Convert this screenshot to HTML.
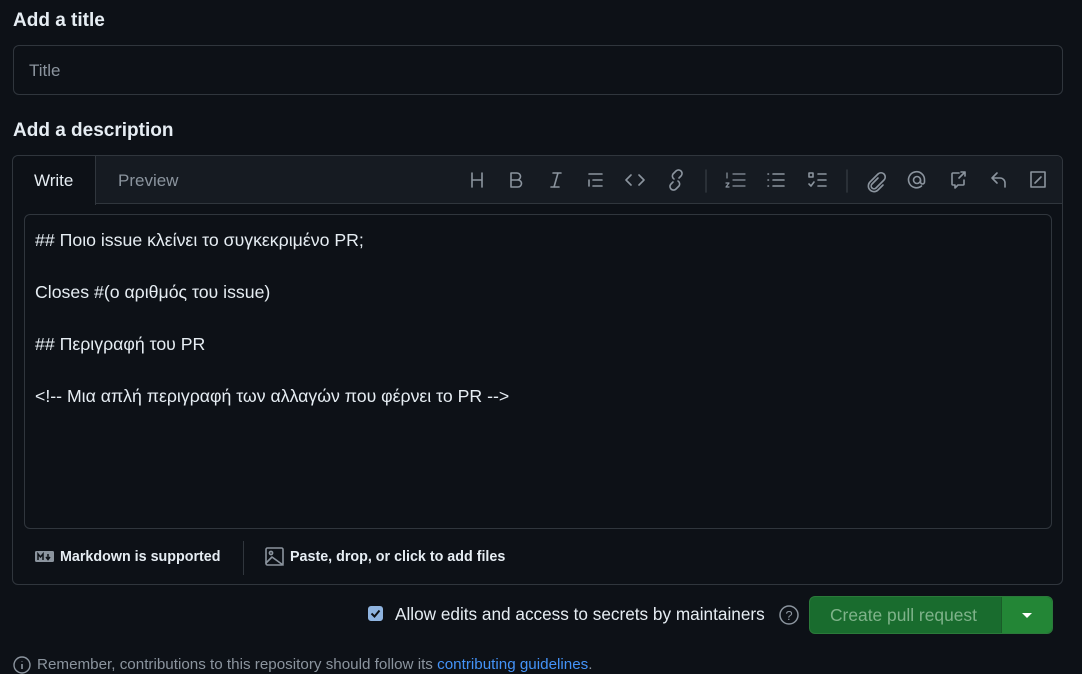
<!DOCTYPE html>
<html><head><style>
*{box-sizing:border-box;margin:0;padding:0}
body{width:1082px;height:672px;overflow:hidden;background:#0d1117;color:#e6edf3;font-family:"Liberation Sans",sans-serif;position:relative}
.abs{position:absolute}
h2{position:absolute;font-size:19px;font-weight:bold;color:#e6edf3}
.inp{left:13px;top:45px;width:1050px;height:50px;border:1px solid #30363d;border-radius:6px;background:#0d1117;color:#8b949e;font-size:17px;padding:15px 0 0 15px}
.ed{left:12px;top:155px;width:1051px;height:430px;border:1px solid #30363d;border-radius:6px}
.hdr{left:0;top:0;width:1049px;height:48px;background:#161b22;border-bottom:1px solid #30363d;border-radius:6px 6px 0 0}
.tab{left:0;top:0;width:83px;height:49px;background:#0d1117;border-right:1px solid #30363d;border-radius:6px 0 0 0;font-size:17px;padding:15px 0 0 21px}
.ta{left:11px;top:58px;width:1028px;height:315px;border:1px solid #30363d;border-radius:6px;font-size:17.7px;line-height:26px;padding:12px 10px;white-space:pre}
svg{position:absolute}
.ic{stroke:#8b949e;fill:none;stroke-width:1.6;stroke-linecap:round;stroke-linejoin:round}
.ft{font-size:14.3px;font-weight:bold;color:#e6edf3}
</style></head><body>
<h2 style="left:13px;top:10px">Add a title</h2>
<div class="abs inp">Title</div>
<h2 style="left:13px;top:120px">Add a description</h2>
<div class="abs ed">
 <div class="abs hdr"></div>
 <div class="abs tab">Write</div>
 <div class="abs" style="left:105px;top:15px;font-size:17px;color:#8b949e">Preview</div>
 <svg width="600" height="48" style="left:440px;top:0" class="ic">
  <g transform="translate(3)"><path d="M16 17v14M26 17v14M16 24h10"/></g>
  <g transform="translate(2)"><path d="M56 17h6a3.5 3.5 0 0 1 0 7h-6zM56 24h7a3.5 3.5 0 0 1 0 7h-7z"/></g>
  <g transform="translate(3)"><path d="M97 17h8M95 31h8M102 17l-4 14"/></g>
  <path d="M136 18h13M140 24h9M140 30h9M136 24v6"/>
  <g transform="translate(-2)"><path d="M180 19l-5 5 5 5M188 19l5 5-5 5"/></g>
  <g transform="translate(-2)"><path d="M222 26l-2 2a3.5 3.5 0 0 0 5 5l3-3a3.5 3.5 0 0 0-1-5M228 22l2-2a3.5 3.5 0 0 0-5-5l-3 3a3.5 3.5 0 0 0 1 5"/></g>
  <path d="M253 14v22" stroke="#30363d"/>
  <g transform="translate(-6)"><path d="M286 18h12M286 24h12M286 30h12M280 17v5M279 27h3l-3 4h3" stroke-width="1.2"/></g>
  <g transform="translate(-7)"><path d="M327 18h11M327 24h11M327 30h11M322 18h.5M322 24h.5M322 30h.5"/></g>
  <g transform="translate(-12)"><path d="M368 17h4v4h-4zM377 18h8M377 24h8M377 30h8M368 28l2 2 3-4"/></g>
  <path d="M394 14v22" stroke="#30363d"/>
  <g transform="translate(-16)"><path d="M441 22l-6 6a2.5 2.5 0 0 0 4 4l8-8a4 4 0 0 0-6-6l-8 8a5.5 5.5 0 0 0 8 8l5-5"/></g>
  <g transform="translate(-13)"><circle cx="477" cy="24" r="3.5"/><path d="M480.5 24v2a2 2 0 0 0 4 0v-2a8 8 0 1 0-3 6"/></g>
  <g transform="translate(-16)"><path d="M522 17h-6a1 1 0 0 0-1 1v10a1 1 0 0 0 1 1h2v3l3-3h5a1 1 0 0 0 1-1v-4M524 16h4v4M528 16l-6 6"/></g>
  <g transform="translate(-11)"><path d="M555 17l-5 5 5 5M550 22h8a5 5 0 0 1 5 5v4"/></g>
  <g transform="translate(-11)"><path d="M589 16h14v15h-14zM593 27l6-6"/></g>
 </svg>
 <div class="abs ta">## Ποιο issue κλείνει το συγκεκριμένο PR;

Closes #(ο αριθμός του issue)

## Περιγραφή του PR

&lt;!-- Μια απλή περιγραφή των αλλαγών που φέρνει το PR --&gt;</div>
 <svg width="20" height="14" style="left:22px;top:394px"><rect x="0" y="1" width="19" height="11" rx="1.5" fill="#8b949e"/><path d="M3 10V4l2.5 3L8 4v6M13 4v5M11 7l2 2.5L15 7" stroke="#0d1117" stroke-width="1.5" fill="none"/></svg>
 <div class="abs ft" style="left:47px;top:393px">Markdown is supported</div>
 <div class="abs" style="left:230px;top:385px;width:1px;height:34px;background:#30363d"></div>
 <svg width="20" height="20" style="left:252px;top:391px" class="ic"><rect x="1" y="1" width="17" height="17" rx="1.5"/><circle cx="6" cy="6" r="1.6"/><path d="M1 16l6-6 11 8"/></svg>
 <div class="abs ft" style="left:277px;top:393px">Paste, drop, or click to add files</div>
</div>
<div class="abs" style="left:368px;top:606px;width:15px;height:15px;background:#8fb4e0;border-radius:3px"></div>
<svg width="15" height="15" style="left:368px;top:606px"><path d="M3.5 7.5l3 3 5-6" stroke="#0d1117" stroke-width="2" fill="none"/></svg>
<div class="abs" style="left:395px;top:604px;font-size:17.2px;color:#e6edf3">Allow edits and access to secrets by maintainers</div>
<svg width="22" height="22" style="left:778px;top:604px"><circle cx="11" cy="11" r="9" stroke="#8b949e" stroke-width="1.5" fill="none"/><text x="11" y="16" font-size="13" fill="#8b949e" text-anchor="middle" font-family="Liberation Sans">?</text></svg>
<div class="abs" style="left:809px;top:596px;width:244px;height:38px;background:#196c2e;border-radius:6px;border:1px solid #2b7a3a"></div>
<div class="abs" style="left:1001px;top:597px;width:51px;height:36px;background:#238636;border-radius:0 6px 6px 0;border-left:1px solid #1a5c28"></div>
<div class="abs" style="left:830px;top:605px;font-size:17.4px;color:#7fb38a">Create pull request</div>
<svg width="12" height="8" style="left:1021px;top:612px"><path d="M1 1h10L6 6z" fill="#fff"/></svg>
<svg width="18" height="18" style="left:13px;top:656px"><circle cx="9" cy="9" r="8" stroke="#8b949e" stroke-width="1.4" fill="none"/><path d="M9 8v5M9 5v.5" stroke="#8b949e" stroke-width="1.6"/></svg>
<div class="abs" style="left:37px;top:656px;font-size:15.2px;color:#8b949e">Remember, contributions to this repository should follow its <span style="color:#4493f8">contributing guidelines</span>.</div>
</body></html>
